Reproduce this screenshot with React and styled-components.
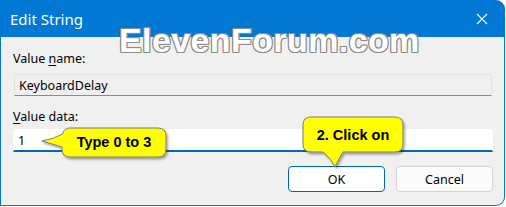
import React from 'react';
import styled, { createGlobalStyle } from 'styled-components';

const GlobalStyle = createGlobalStyle`
  html, body {
    margin: 0;
    padding: 0;
    background: #ffffff;
  }
  body {
    font-family: "Noto Sans", "Open Sans", "DejaVu Sans", sans-serif;
  }
`;

const Window = styled.div`
  position: relative;
  width: 505px;
  height: 206px;
  box-sizing: border-box;
  background: #0078d4;
  border-radius: 0 9px 9px 0;
  padding: 0 1px 1px 1px;
  display: flex;
  flex-direction: column;
  overflow: hidden;
`;

const TitleBar = styled.div`
  height: 37px;
  flex: 0 0 37px;
  display: flex;
  align-items: center;
  justify-content: space-between;
  padding: 0 16px 0 9px;
  color: #ffffff;
  font-size: 15px;
`;

const CloseButton = styled.svg`
  width: 12px;
  height: 12px;
  display: block;
`;

const Body = styled.div`
  flex: 1;
  background: #f0f0f0;
  border-radius: 0 0 8px 0;
  padding: 13px 11px 0 12px;
  display: flex;
  flex-direction: column;
  font-size: 12.5px;
  color: #000000;
`;

const Label = styled.div`
  height: 17px;
  line-height: 17px;
  margin-bottom: ${(p) => p.gap}px;
  u {
    text-decoration: underline;
    text-underline-offset: 2px;
  }
`;

const Field = styled.div`
  height: ${(p) => (p.active ? 23 : 22)}px;
  box-sizing: border-box;
  margin: 0 ${(p) => (p.active ? 0 : 1)}px ${(p) => p.after}px;
  padding: 0 4px;
  display: flex;
  align-items: center;
  background: ${(p) => (p.active ? '#ffffff' : '#f0f0f0')};
  border: 1px solid ${(p) => (p.active ? '#ffffff' : '#e3e3e3')};
  border-bottom: ${(p) => (p.active ? '2px solid #0067c0' : '1px solid #8a8a8a')};
  border-radius: 3px 3px 0 0;
`;

const ButtonRow = styled.div`
  display: flex;
  justify-content: flex-end;
  gap: 11px;
  padding-right: 0;
`;

const Button = styled.div`
  width: 97px;
  height: 26px;
  box-sizing: border-box;
  display: flex;
  align-items: center;
  justify-content: center;
  border-radius: 4px;
  background: ${(p) => (p.primary ? '#ffffff' : '#fbfbfb')};
  border: 1px solid ${(p) => (p.primary ? '#0067c0' : '#d3d3d3')};
  font-size: 12.5px;
`;

const Watermark = styled.div`
  position: absolute;
  left: 119px;
  top: 21px;
  font-family: "Liberation Sans", Arial, sans-serif;
  font-weight: bold;
  font-size: 34px;
  letter-spacing: 0.4px;
  color: #ffffff;
  text-shadow:
    1px 0 0 #8c8c8c, -1px 0 0 #8c8c8c, 0 1px 0 #8c8c8c, 0 -1px 0 #8c8c8c,
    1px 1px 0 #8c8c8c, -1px -1px 0 #8c8c8c, 1px -1px 0 #8c8c8c, -1px 1px 0 #8c8c8c;
  pointer-events: none;
`;

const Callout = styled.div`
  position: absolute;
  left: ${(p) => p.x}px;
  top: ${(p) => p.y}px;
  width: ${(p) => p.w}px;
  height: ${(p) => p.h}px;
  svg {
    position: absolute;
    left: 0;
    top: 0;
    overflow: visible;
  }
`;

const CalloutText = styled.span`
  position: absolute;
  left: ${(p) => p.x}px;
  top: ${(p) => p.y}px;
  width: ${(p) => p.w}px;
  text-align: center;
  font-family: "Liberation Sans", Arial, sans-serif;
  font-weight: bold;
  font-size: 14.5px;
  line-height: 18px;
  color: #000000;
`;

export default function App() {
  return (
    <>
      <GlobalStyle />
      <Window>
        <TitleBar>
          <span>Edit String</span>
          <CloseButton viewBox="0 0 12 12">
            <path d="M1 1 L11 11 M11 1 L1 11" stroke="#ffffff" strokeWidth="1.1" fill="none" />
          </CloseButton>
        </TitleBar>
        <Body>
          <Label gap={7}>Value <u>n</u>ame:</Label>
          <Field after={12}>KeyboardDelay</Field>
          <Label gap={4}><u>V</u>alue data:</Label>
          <Field active after={14}>1</Field>
          <ButtonRow>
            <Button primary>OK</Button>
            <Button>Cancel</Button>
          </ButtonRow>
        </Body>

        <Watermark>ElevenForum.com</Watermark>

        <Callout x={40} y={126} w={128} h={34}>
          <svg width="128" height="34" viewBox="0 0 128 34">
            <defs>
              <filter id="sh1" x="-10%" y="-20%" width="130%" height="160%">
                <feDropShadow dx="1.5" dy="2" stdDeviation="1.2" floodColor="#000" floodOpacity="0.35" />
              </filter>
            </defs>
            <path
              d="M30 2 H118 Q126 2 126 10 V23 Q126 31 118 31 H30 Q22 31 22 23 V21 Q12 18 2 15 Q14 13 22.5 8 Q24 2 30 2 Z"
              fill="#ffff00"
              stroke="#7a7a7a"
              strokeWidth="1"
              filter="url(#sh1)"
            />
          </svg>
          <CalloutText x={22} y={7} w={104}>Type 0 to 3</CalloutText>
        </Callout>

        <Callout x={302} y={116} w={104} h={54}>
          <svg width="104" height="54" viewBox="0 0 104 54">
            <defs>
              <filter id="sh2" x="-10%" y="-10%" width="130%" height="130%">
                <feDropShadow dx="1.5" dy="2" stdDeviation="1.2" floodColor="#000" floodOpacity="0.35" />
              </filter>
            </defs>
            <path
              d="M9 1 H93 Q101 1 101 9 V28 Q101 36 93 36 H41 Q36 44 33 51 Q30 43 21 36 H9 Q1 36 1 28 V9 Q1 1 9 1 Z"
              fill="#ffff00"
              stroke="#7a7a7a"
              strokeWidth="1"
              filter="url(#sh2)"
            />
          </svg>
          <CalloutText x={1} y={10} w={100}>2. Click on</CalloutText>
        </Callout>
      </Window>
    </>
  );
}
